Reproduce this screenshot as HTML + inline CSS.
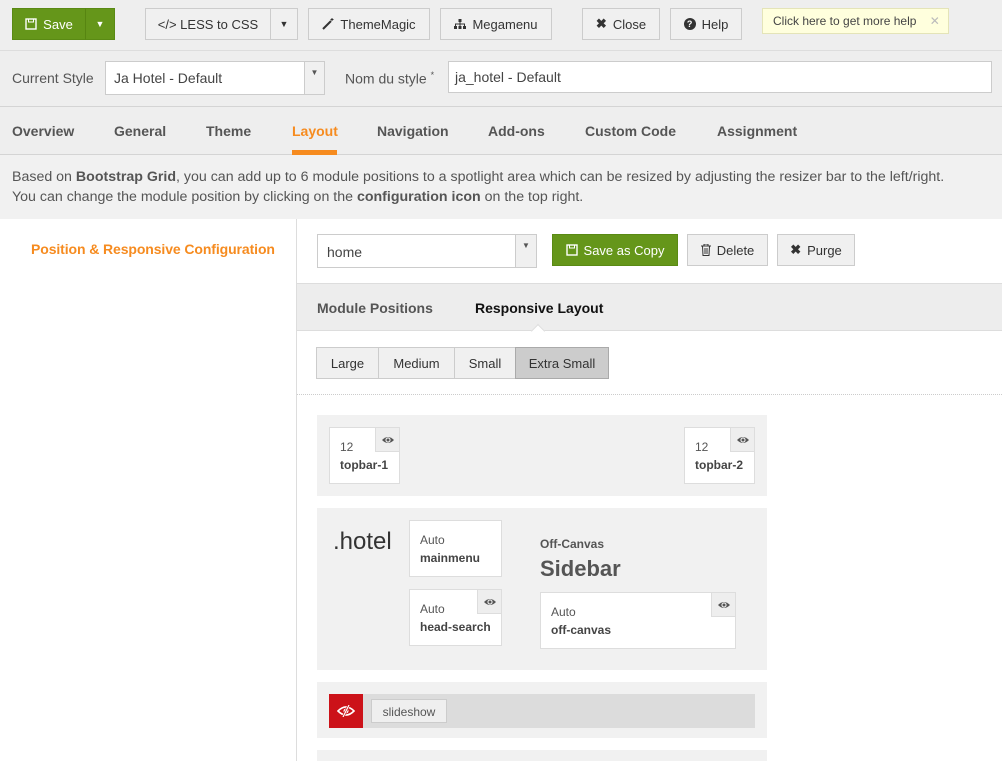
<!DOCTYPE html>
<html><head><meta charset="utf-8"><style>
*{box-sizing:border-box;margin:0;padding:0}
body{width:1002px;height:761px;overflow:hidden;background:#fff;font-family:"Liberation Sans",Arial,sans-serif;color:#444;font-size:13px;position:relative}
.a{position:absolute}
.btn{position:absolute;border:1px solid #ccc;background:#f0f0f0;color:#333;font-size:13px;display:flex;align-items:center;justify-content:center;gap:6px}
.grn{background:#65961a;border-color:#5a8a14;color:#fff}
.box{position:absolute;background:#fff;border:1px solid #ddd}
.box .n{position:absolute;left:10px;top:12px;font-size:12px;color:#555}
.box .m{position:absolute;left:10px;top:30px;font-size:12px;font-weight:bold;color:#444}
.eye{position:absolute;right:0;top:0;width:24px;height:24px;background:#eee;border-left:1px solid #ddd;border-bottom:1px solid #ddd;display:flex;align-items:center;justify-content:center}
.tab{position:absolute;top:123px;font-weight:bold;font-size:14px;color:#555}
.blk{position:absolute;left:317px;width:450px;background:#f1f1f1}
</style></head><body>
<svg width="0" height="0" style="position:absolute"><defs><g id="ey"><path d="M1 5Q7-1 13 5Q7 11 1 5Z" fill="#555"/><circle cx="7" cy="5" r="2.6" fill="#eee"/><circle cx="7" cy="5" r="1.5" fill="#555"/></g></defs></svg>
<div class="a" style="left:0;top:0;width:1002px;height:155px;background:#eee"></div>
<div class="a" style="left:0;top:50px;width:1002px;height:1px;background:#ddd"></div>
<div class="a" style="left:0;top:106px;width:1002px;height:1px;background:#d4d4d4"></div>
<div class="a" style="left:0;top:154px;width:1002px;height:1px;background:#d4d4d4"></div>

<div class="btn grn" style="left:12px;top:8px;width:74px;height:32px"><svg width="12" height="12" viewBox="0 0 12 12"><rect x="1" y="1" width="10" height="10" fill="none" stroke="#fff" stroke-width="1.4"/><rect x="3.5" y="1" width="5" height="3" fill="none" stroke="#fff"/></svg>Save</div>
<div class="btn grn" style="left:85px;top:8px;width:30px;height:32px;border-left-color:#578511"><span style="font-size:9px">▼</span></div>
<div class="btn" style="left:145px;top:8px;width:126px;height:32px">&lt;/&gt; LESS to CSS</div>
<div class="btn" style="left:270px;top:8px;width:28px;height:32px"><span style="font-size:9px">▼</span></div>
<div class="btn" style="left:308px;top:8px;width:122px;height:32px"><svg width="12" height="12"><path d="M1 11L9 3" stroke="#333" stroke-width="2"/><path d="M10 0v3M8.5 1.5h3" stroke="#333"/></svg>ThemeMagic</div>
<div class="btn" style="left:440px;top:8px;width:112px;height:32px"><svg width="12" height="11"><rect x="4.5" y="0" width="3" height="3" fill="#333"/><rect x="0" y="7" width="3" height="3" fill="#333"/><rect x="4.5" y="7" width="3" height="3" fill="#333"/><rect x="9" y="7" width="3" height="3" fill="#333"/><path d="M1.5 7V5h9v2M6 3v4" stroke="#333" fill="none"/></svg>Megamenu</div>
<div class="btn" style="left:582px;top:8px;width:78px;height:32px"><b>✖</b> Close</div>
<div class="btn" style="left:670px;top:8px;width:72px;height:32px"><span style="display:inline-block;width:12px;height:12px;border-radius:50%;background:#333;color:#fff;font-size:9px;line-height:12px;text-align:center;font-weight:bold">?</span> Help</div>
<div class="a" style="left:762px;top:8px;width:187px;height:26px;background:#ffffdd;border:1px solid #e4e4b8;font-size:12px;color:#444;padding:5px 0 0 10px">Click here to get more help <span style="color:#bbb;margin-left:10px">✕</span></div>

<div class="a" style="left:12px;top:70px;font-size:14px;color:#555">Current Style</div>
<div class="a" style="left:105px;top:61px;width:220px;height:34px;background:#fff;border:1px solid #ccc;font-size:14px;padding:8px 8px">Ja Hotel - Default</div>
<div class="a" style="left:304px;top:62px;width:20px;height:32px;background:#f0f0f0;border-left:1px solid #ccc;font-size:8px;text-align:center;padding-top:6px;color:#555">▼</div>
<div class="a" style="left:345px;top:70px;font-size:14px;color:#555">Nom du style <sup style="font-size:9px">*</sup></div>
<div class="a" style="left:448px;top:61px;width:544px;height:32px;background:#fff;border:1px solid #ccc;font-size:14px;padding:7px 6px">ja_hotel - Default</div>

<div class="tab" style="left:12px">Overview</div>
<div class="tab" style="left:114px">General</div>
<div class="tab" style="left:206px">Theme</div>
<div class="tab" style="left:292px;color:#f68b1f">Layout</div>
<div class="a" style="left:292px;top:150px;width:45px;height:5px;background:#f68b1f"></div>
<div class="tab" style="left:377px">Navigation</div>
<div class="tab" style="left:488px">Add-ons</div>
<div class="tab" style="left:585px">Custom Code</div>
<div class="tab" style="left:717px">Assignment</div>

<div class="a" style="left:0;top:155px;width:1002px;height:64px;background:#f1f1f1"></div>
<div class="a" style="left:12px;top:167px;font-size:14.2px;line-height:20px;color:#555;white-space:nowrap">Based on <b>Bootstrap Grid</b>, you can add up to 6 module positions to a spotlight area which can be resized by adjusting the resizer bar to the left/right.<br>You can change the module position by clicking on the <b>configuration icon</b> on the top right.</div>

<div class="a" style="left:296px;top:219px;width:1px;height:542px;background:#ddd"></div>
<div class="a" style="left:31px;top:241px;font-size:14px;font-weight:bold;color:#f68b1f;letter-spacing:-0.1px">Position &amp; Responsive Configuration</div>

<div class="a" style="left:317px;top:234px;width:220px;height:34px;background:#fff;border:1px solid #ccc;font-size:14px;padding:9px 9px">home</div>
<div class="a" style="left:515px;top:235px;width:21px;height:32px;background:#f0f0f0;border-left:1px solid #ccc;font-size:8px;text-align:center;padding-top:6px;color:#555">▼</div>
<div class="btn grn" style="left:552px;top:234px;width:126px;height:32px"><svg width="12" height="12" viewBox="0 0 12 12"><rect x="1" y="1" width="10" height="10" fill="none" stroke="#fff" stroke-width="1.4"/><rect x="3.5" y="1" width="5" height="3" fill="none" stroke="#fff"/></svg>Save as Copy</div>
<div class="btn" style="left:687px;top:234px;width:81px;height:32px"><svg width="10" height="12"><path d="M0 2h10M3 2V0h4v2M1.5 2l.5 9.5h6L8.5 2M4 4v6M6 4v6" stroke="#333" fill="none"/></svg>Delete</div>
<div class="btn" style="left:777px;top:234px;width:78px;height:32px"><b>✖</b> Purge</div>

<div class="a" style="left:297px;top:283px;width:705px;height:48px;background:#ededed;border-top:1px solid #ddd;border-bottom:1px solid #ddd"></div>
<div class="a" style="left:317px;top:300px;font-size:14px;font-weight:bold;color:#555">Module Positions</div>
<div class="a" style="left:475px;top:300px;font-size:14px;font-weight:bold;color:#111">Responsive Layout</div>
<div class="a" style="left:533px;top:326px;width:10px;height:10px;background:#fff;border-left:1px solid #ddd;border-top:1px solid #ddd;transform:rotate(45deg)"></div>

<div class="btn" style="left:316px;top:347px;width:63px;height:32px">Large</div>
<div class="btn" style="left:378px;top:347px;width:77px;height:32px">Medium</div>
<div class="btn" style="left:454px;top:347px;width:62px;height:32px">Small</div>
<div class="btn" style="left:515px;top:347px;width:94px;height:32px;background:#ccc;border-color:#aaa">Extra Small</div>
<div class="a" style="left:297px;top:394px;width:705px;border-top:1px dotted #ccc"></div>

<div class="blk" style="top:415px;height:81px"></div>
<div class="box" style="left:329px;top:427px;width:71px;height:57px"><div class="n">12</div><div class="m">topbar-1</div><div class="eye"><svg width="14" height="10"><use href="#ey"/></svg></div></div>
<div class="box" style="left:684px;top:427px;width:71px;height:57px"><div class="n">12</div><div class="m">topbar-2</div><div class="eye"><svg width="14" height="10"><use href="#ey"/></svg></div></div>

<div class="blk" style="top:508px;height:162px"></div>
<div class="a" style="left:333px;top:528px;font-size:24px;color:#333">.hotel</div>
<div class="box" style="left:409px;top:520px;width:93px;height:57px"><div class="n">Auto</div><div class="m">mainmenu</div></div>
<div class="box" style="left:409px;top:589px;width:93px;height:57px"><div class="n">Auto</div><div class="m">head-search</div><div class="eye"><svg width="14" height="10"><use href="#ey"/></svg></div></div>
<div class="a" style="left:540px;top:537px;font-size:12px;font-weight:bold;color:#555">Off-Canvas</div>
<div class="a" style="left:540px;top:556px;font-size:22px;font-weight:bold;color:#555">Sidebar</div>
<div class="box" style="left:540px;top:592px;width:196px;height:57px"><div class="n">Auto</div><div class="m">off-canvas</div><div class="eye"><svg width="14" height="10"><use href="#ey"/></svg></div></div>

<div class="blk" style="top:682px;height:56px"></div>
<div class="a" style="left:329px;top:694px;width:426px;height:34px;background:#dcdcdc"></div>
<div class="a" style="left:329px;top:694px;width:34px;height:34px;background:#cc1219;color:#fff;display:flex;align-items:center;justify-content:center"><svg width="18" height="12" viewBox="0 0 18 12"><path d="M1 6Q9-2 17 6Q9 14 1 6Z" fill="none" stroke="#fff" stroke-width="1.6"/><circle cx="9" cy="6" r="2.5" fill="#fff"/><path d="M12 0L6 12" stroke="#cc1219" stroke-width="2.5"/><path d="M12 0L6 12" stroke="#fff" stroke-width="1.2"/></svg></div>
<div class="a" style="left:371px;top:699px;width:76px;height:24px;background:#efefef;border:1px solid #ccc;font-size:12px;text-align:center;padding-top:5px;color:#555">slideshow</div>

<div class="blk" style="top:750px;height:11px"></div>
</body></html>
